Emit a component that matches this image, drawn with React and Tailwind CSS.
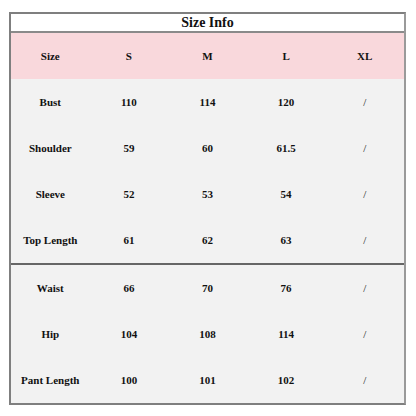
const HEAD = ['Size', 'S', 'M', 'L', 'XL']

const TOP = [
  ['Bust', '110', '114', '120', '/'],
  ['Shoulder', '59', '60', '61.5', '/'],
  ['Sleeve', '52', '53', '54', '/'],
  ['Top Length', '61', '62', '63', '/'],
]

const BOTTOM = [
  ['Waist', '66', '70', '76', '/'],
  ['Hip', '104', '108', '114', '/'],
  ['Pant Length', '100', '101', '102', '/'],
]

function Row({ cells, className = '' }) {
  return (
    <div className={`grid grid-cols-5 h-[46px] items-center ${className}`}>
      {cells.map((c, i) => (
        <div
          key={i}
          className={`text-center text-[11px] text-[#111] ${c === '/' ? 'font-normal' : 'font-bold'}`}
        >
          {c}
        </div>
      ))}
    </div>
  )
}

export default function App() {
  return (
    <div className="w-[416px] h-[416px] bg-white pt-[12px] pl-[9px] font-['Liberation_Serif',serif]">
      <div className="w-[397px] border-2 border-[#7f7f7f] border-r-[#9a9a9a] bg-[#f2f2f2]">
        <div className="h-[17px] bg-white flex items-center justify-center text-[14px] font-bold text-[#111] leading-none">
          Size Info
        </div>
        <div className="h-[2px] bg-[#8a8a8a]" />
        <Row cells={HEAD} className="bg-[#f9d8dc] h-[45px]" />
        {TOP.map((r) => (
          <Row key={r[0]} cells={r} />
        ))}
        <div className="h-[2px] bg-[#666]" />
        {BOTTOM.map((r) => (
          <Row key={r[0]} cells={r} />
        ))}
      </div>
    </div>
  )
}
